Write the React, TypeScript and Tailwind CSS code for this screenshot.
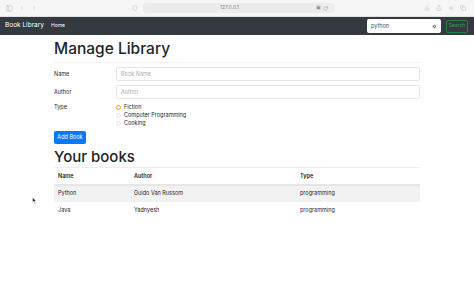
import { ChevronLeft, ChevronRight, PanelLeft, RotateCw, Shield, Share, Plus, Copy, Download, XCircle } from "lucide-react";

const books = [
  { name: "Python", author: "Guido Van Russom", type: "programming" },
  { name: "Java", author: "Yadnyesh", type: "programming" },
];

function Radio({ label, checked }: { label: string; checked?: boolean }) {
  return (
    <label className="flex items-center gap-[3px] leading-[8px]">
      <span
        className={
          checked
            ? "h-[5px] w-[5px] rounded-full border-[1.5px] border-[#e0a800] bg-white"
            : "h-[5px] w-[5px] rounded-full border border-[#e6e6e6] bg-white"
        }
      />
      {label}
    </label>
  );
}

export default function App() {
  return (
    <div
      className="relative h-[296px] w-[474px] overflow-hidden bg-white text-[#212529]"
      style={{ fontFamily: "Inter, 'Liberation Sans', sans-serif" }}
    >
      {/* browser toolbar */}
      <div className="flex h-[17px] items-center border-b border-[#e2e2e2] bg-[#f6f6f6] px-[6px] text-[#b4b4b4]">
        <div className="flex w-[126px] items-center gap-[6px]">
          <PanelLeft className="h-[7px] w-[7px]" strokeWidth={1.5} />
          <ChevronLeft className="h-[6px] w-[6px]" strokeWidth={1.5} />
          <ChevronRight className="h-[6px] w-[6px]" strokeWidth={1.5} />
        </div>
        <Shield className="h-[6px] w-[6px]" strokeWidth={1.5} />
        <div className="ml-[5px] flex h-[10px] w-[191px] items-center justify-center rounded-[3px] bg-[#ececec] text-[5px] text-[#8a8a8a]">
          <span className="flex-1 text-center">127.0.0.1</span>
          <span className="mr-[6px] flex items-center gap-[2px]">
            <span className="text-[5px]">▣</span>
            <RotateCw className="h-[5px] w-[5px]" strokeWidth={1.5} />
          </span>
        </div>
        <div className="ml-auto flex items-center gap-[6px] pr-[2px]">
          <Download className="h-[6px] w-[6px]" strokeWidth={1.5} />
          <Share className="h-[6px] w-[6px]" strokeWidth={1.5} />
          <Plus className="h-[6px] w-[6px]" strokeWidth={1.5} />
          <Copy className="h-[6px] w-[6px]" strokeWidth={1.5} />
        </div>
      </div>

      {/* navbar */}
      <nav className="flex h-[18px] items-center bg-[#343a40] pl-[5px] pr-[6px]">
        <span className="text-[6.5px] text-white">Book Library</span>
        <span className="ml-[7px] text-[5px] text-white">Home</span>
        <div className="ml-auto flex items-center gap-[5px]">
          <div className="flex h-[14px] w-[74px] items-center rounded-[2px] bg-white px-[4px] text-[5.5px] text-[#495057]">
            <span className="flex-1">python</span>
            <XCircle className="h-[5px] w-[5px] fill-[#8a8a8a] text-white" strokeWidth={2} />
          </div>
          <button className="h-[13px] w-[22px] rounded-[2px] border border-[#28a745]/60 text-[5px] text-[#28a745]">
            Search
          </button>
        </div>
      </nav>

      {/* content */}
      <div className="mx-auto w-[366px] pt-[4px]">
        <h1 className="text-[15.5px] leading-[20px] font-medium">Manage Library</h1>
        <div className="mt-[3px] border-t border-[#f0f0f0]" />

        <div className="mt-[4px] flex flex-col gap-[4px] text-[5.5px]">
          <div className="flex items-center">
            <span className="w-[62px]">Name</span>
            <div className="flex h-[14px] flex-1 items-center rounded-[2px] border border-[#e5e5e5] px-[4px] text-[#a9adb1]">
              Book Name
            </div>
          </div>
          <div className="flex items-center">
            <span className="w-[62px]">Author</span>
            <div className="flex h-[14px] flex-1 items-center rounded-[2px] border border-[#e5e5e5] px-[4px] text-[#a9adb1]">
              Author
            </div>
          </div>
          <div className="flex">
            <span className="w-[62px] leading-[8px]">Type</span>
            <div className="flex flex-col">
              <Radio label="Fiction" checked />
              <Radio label="Computer Programming" />
              <Radio label="Cooking" />
            </div>
          </div>
        </div>

        <button className="mt-[4px] block h-[13px] w-[32px] rounded-[2px] bg-[#007bff] text-[5.5px] text-white">
          Add Book
        </button>

        <h2 className="mt-[3px] text-[15px] leading-[20px] font-medium">Your books</h2>

        <table className="w-full border-collapse text-[5.5px]">
          <thead>
            <tr className="border-t border-[#ececec] border-b-2 border-b-[#e6e6e6] text-left">
              <th className="h-[17px] w-[80px] pl-[4px] font-semibold">Name</th>
              <th className="w-[166px] font-semibold">Author</th>
              <th className="font-semibold">Type</th>
            </tr>
          </thead>
          <tbody>
            {books.map((b, i) => (
              <tr key={b.name} className={i % 2 === 0 ? "bg-[#f2f2f2]" : ""}>
                <td className="h-[17px] pl-[4px]">{b.name}</td>
                <td>{b.author}</td>
                <td>{b.type}</td>
              </tr>
            ))}
          </tbody>
        </table>
      </div>

      {/* mouse cursor */}
      <svg className="absolute left-[32px] top-[197px]" width="5" height="7" viewBox="0 0 10 14">
        <path d="M1 1 L1 11 L3.5 8.5 L5.5 13 L7 12.3 L5 8 L8.5 8 Z" fill="#222" stroke="#fff" strokeWidth="1" />
      </svg>
    </div>
  );
}
